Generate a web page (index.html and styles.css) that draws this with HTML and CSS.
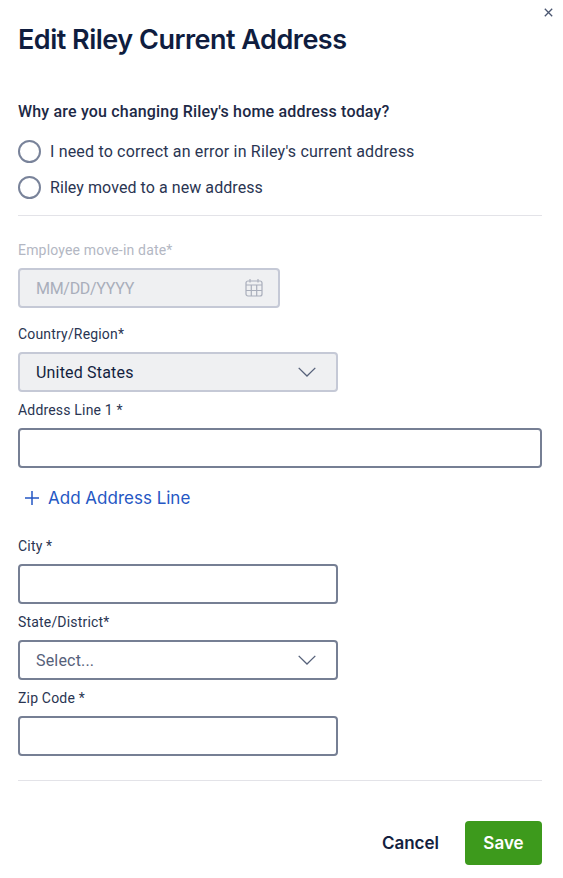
FILE: index.html
```html
<!DOCTYPE html>
<html lang="en">
<head>
    <meta charset="UTF-8">
    <title>Edit Riley Current Address</title>
    <link rel="stylesheet" href="styles.css">
</head>
<body>

<div class="modal">
    <button class="close" type="button" aria-label="Close">
        <svg width="9" height="9" viewBox="0 0 9 9"><path d="M.8.8l7.4 7.4M8.2.8L.8 8.2" stroke="#4a5670" stroke-width="1.3" fill="none"/></svg>
    </button>

    <h1 class="title">Edit Riley Current Address</h1>

    <p class="question">Why are you changing Riley's home address today?</p>
    <label class="radio"><span class="circle"></span>I need to correct an error in Riley's current address</label>
    <label class="radio radio-short"><span class="circle"></span>Riley moved to a new address</label>

    <hr class="rule rule-top">

    <label class="label label-disabled">Employee move-in date*</label>
    <div class="field field-short field-disabled">
        <span class="date-hint">MM/DD/YYYY</span>
        <svg width="18" height="18" viewBox="0 0 18 18" fill="none" stroke="#a9aebb" stroke-width="1.2"><rect x="1" y="2" width="16" height="15" rx="2"/><path d="M1 6h16M1 11.500h16M6.300 6v11M11.700 6v11M5 0v3.500M13 0v3.500"/></svg>
    </div>

    <label class="label">Country/Region*</label>
    <div class="field field-short field-locked">
        <span>United States</span>
        <svg class="chevron" width="18" height="10" viewBox="0 0 18 10" fill="none" stroke="#56617a" stroke-width="1.3"><path d="M.7.9L9 9l8.300-8.100"/></svg>
    </div>

    <label class="label">Address Line 1 *</label>
    <div class="field"></div>

    <a class="add-line" href="#">
        <svg width="14" height="14" viewBox="0 0 14 14" stroke="#2557c4" stroke-width="1.5" fill="none"><path d="M7 0v14M0 7h14"/></svg>
        Add Address Line
    </a>

    <label class="label">City *</label>
    <div class="field field-short"></div>

    <label class="label">State/District*</label>
    <div class="field field-short">
        <span class="placeholder">Select...</span>
        <svg class="chevron" width="18" height="10" viewBox="0 0 18 10" fill="none" stroke="#56617a" stroke-width="1.3"><path d="M.7.9L9 9l8.300-8.100"/></svg>
    </div>

    <label class="label">Zip Code *</label>
    <div class="field field-short"></div>

    <hr class="rule rule-bottom">

    <div class="actions">
        <button class="cancel" type="button">Cancel</button>
        <button class="save" type="button">Save</button>
    </div>
</div>

</body>
</html>
```

FILE: styles.css
```css
* {
    box-sizing: border-box;
}
body {
    margin: 0;
    background: #fff;
    font-family: Roboto, "Noto Sans", sans-serif;
    letter-spacing: 0.18px;
    color: #131f3f;
}
.modal {
    position: relative;
    width: 563px;
    height: 878px;
    padding: 24px 21px 0 18px;
    overflow: hidden;
}
.close {
    position: absolute;
    top: 8px;
    right: 10px;
    padding: 0;
    border: none;
    background: none;
    line-height: 0;
}
.title {
    margin: 0;
    height: 32px;
    font-family: Inter, sans-serif;
    font-size: 27px;
    font-weight: 600;
    line-height: 32px;
    letter-spacing: -0.5px;
    color: #0f1d3f;
}
.question {
    margin: 45px 0 0;
    height: 22px;
    font-size: 16px;
    font-weight: 500;
    line-height: 22px;
    color: #1d2946;
}
.radio {
    display: flex;
    align-items: center;
    gap: 9px;
    height: 24px;
    margin-top: 16px;
    font-size: 16px;
    color: #2a3552;
}
.radio + .radio {
    margin-top: 12px;
}
.radio-short {
    letter-spacing: 0.07px;
}
.circle {
    width: 23px;
    height: 23px;
    border: 2px solid #79839a;
    border-radius: 50%;
}
.rule {
    height: 1px;
    margin: 0;
    border: none;
    background: #e3e3e8;
}
.rule-top {
    margin-top: 16px;
    margin-bottom: 25px;
}
.rule-bottom {
    margin-top: 24px;
}
.label {
    display: block;
    height: 18px;
    margin-bottom: 9px;
    font-size: 14px;
    line-height: 18px;
    color: #2a3552;
}
.label-disabled {
    color: #b3b7c3;
}
.field {
    display: flex;
    align-items: center;
    justify-content: space-between;
    height: 40px;
    margin-bottom: 9px;
    padding: 0 16px;
    border: 2px solid #767f94;
    border-radius: 4px;
    font-size: 16px;
}
.field-short {
    width: 320px;
}
.field-disabled {
    width: 262px;
    margin-bottom: 17px;
    border-color: #c5c9d6;
    background: #eff0f2;
    color: #a9aebb;
}
.field-disabled svg {
    margin-right: -1px;
}
.date-hint {
    letter-spacing: -0.3px;
}
.field-locked {
    border-color: #c5c9d6;
    background: #eff0f2;
}
.placeholder {
    color: #56617a;
}
.chevron {
    margin-right: 4px;
}
.add-line {
    display: flex;
    align-items: center;
    gap: 9px;
    height: 24px;
    margin: 18px 0 27px 7px;
    font-family: Inter, sans-serif;
    font-size: 17px;
    letter-spacing: 0;
    color: #2557c4;
    text-decoration: none;
}
.actions {
    display: flex;
    align-items: center;
    justify-content: flex-end;
    gap: 26px;
    margin-top: 40px;
}
.actions button {
    font-family: Inter, sans-serif;
    font-size: 17px;
    font-weight: 600;
    letter-spacing: 0;
    border: none;
}
.cancel {
    padding: 0;
    background: none;
    color: #131f3f;
}
.save {
    width: 77px;
    height: 44px;
    border-radius: 4px;
    background: #3d9a1c;
    color: #fff;
}
```
